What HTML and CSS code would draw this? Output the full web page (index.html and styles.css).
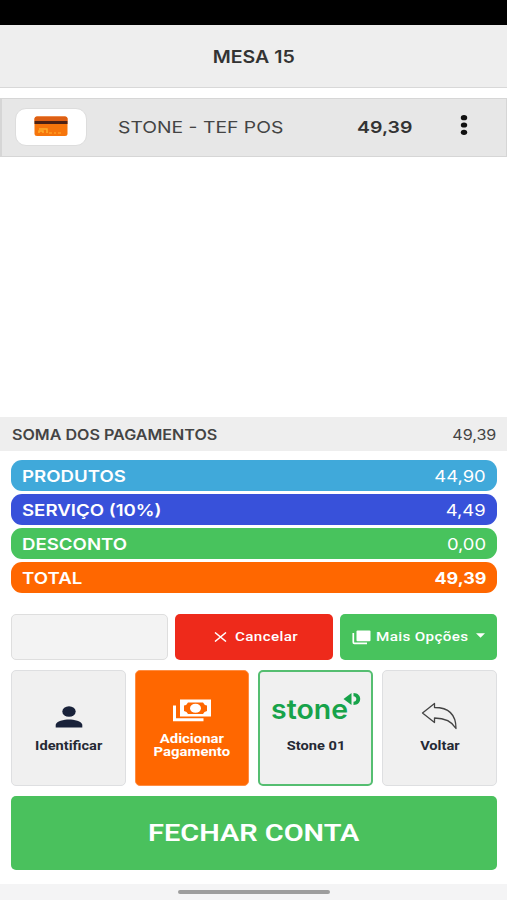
FILE: index.html
```html
<!DOCTYPE html>
<html lang="pt-BR">
<head>
<meta charset="utf-8">
<title>Mesa 15</title>
<link rel="stylesheet" href="styles.css">
</head>
<body>
<div class="statusbar"></div>
<header class="header"><h1 class="t t-title">MESA 15</h1></header>
<section class="payment">
  <div class="card-icon">
    <svg width="34" height="21" viewBox="0 0 34 21"><rect x=".5" y=".5" width="33" height="19.5" rx="2.5" fill="#f6750b"/><path d="M.5 5V3Q.5.5 3 .5h28q2.5 0 2.500 2.500v2z" fill="#dd5f14"/><path d="M.5 5h33v3H.5z" fill="#4c2115"/><path d="M5 13h8v4M5 17v-2h4v2" fill="none" stroke="#ffad2c" stroke-width="1.500"/><path d="M15 17h3m2 0h2m2 0h3" stroke="#ff9c22" stroke-width="1.300"/></svg>
  </div>
  <div class="method"><span class="t t-method">STONE - TEF POS</span></div>
  <div class="amount"><span class="t t-amount">49,39</span></div>
  <svg class="dots" width="10" height="22" viewBox="0 0 10 22"><ellipse cx="5" cy="3.700" rx="3.200" ry="2.600"/><ellipse cx="5" cy="11" rx="3.200" ry="2.600"/><ellipse cx="5" cy="18.300" rx="3.200" ry="2.600"/></svg>
</section>
<main class="space"></main>
<section class="sum"><span class="t t-sum">SOMA DOS PAGAMENTOS</span><span class="t r t-sumv">49,39</span></section>
<section class="totals">
  <div class="row products"><span class="t">PRODUTOS</span><span class="t r">44,90</span></div>
  <div class="row service"><span class="t">SERVIÇO (10%)</span><span class="t r">4,49</span></div>
  <div class="row discount"><span class="t">DESCONTO</span><span class="t r">0,00</span></div>
  <div class="row total"><span class="t">TOTAL</span><span class="t r t-strong">49,39</span></div>
</section>
<section class="actions">
  <div class="btn blank"></div>
  <button class="btn cancel"><svg width="13" height="10" viewBox="0 0 13 10"><path d="M1 .5l11 9M12 .5l-11 9" stroke="#fff" stroke-width="1.500"/></svg><span class="t">Cancelar</span></button>
  <button class="btn more"><svg width="19" height="15" viewBox="0 0 19 15"><rect x="4.500" y=".5" width="14" height="10.800" rx="1" fill="#fff"/><path d="M1.300 3v9.300q0 1 1 1H15" fill="none" stroke="#fff" stroke-width="1.700"/></svg><span class="t">Mais Opções</span><svg class="caret" width="9" height="5" viewBox="0 0 9 5"><path d="M0 .3h9L4.500 4.700z" fill="#fff"/></svg></button>
</section>
<section class="tiles">
  <button class="tile"><svg class="ico" width="28" height="22" viewBox="0 0 28 22"><ellipse cx="14" cy="5.500" rx="6.700" ry="5.300" fill="#19223a"/><path d="M.7 21.500v-2.700c0-3.600 8.800-5.400 13.300-5.400s13.300 1.800 13.300 5.400v2.700z" fill="#19223a"/></svg><span class="t">Identificar</span></button>
  <button class="tile add"><svg class="ico" width="38" height="24" viewBox="0 0 38 24"><path d="M1.500 6.500v14.300H30.500" fill="none" stroke="#fff" stroke-width="3"/><path fill="#fff" fill-rule="evenodd" d="M7 .5h31v17H7zM15 3.500Q14 6 11 6.500v5.500q3 .5 4 3h15q1-2.500 4-3v-5.500Q31 6 30 3.500z"/><ellipse cx="22.500" cy="9.300" rx="5.500" ry="4.500" fill="#fff"/></svg><span class="t">Adicionar</span><span class="t">Pagamento</span></button>
  <button class="tile selected"><svg class="logo" width="90" height="36" viewBox="0 0 90 36" fill="#17a34a"><text class="brand" x="0" y="27" textLength="77" lengthAdjust="spacingAndGlyphs">stone</text><path d="M80.500 1v12L72.500 7zM82.500 1C91.500 1 91.500 13 82.500 13V9.800C86.300 9.500 86.300 4.500 82.500 4.200z"/></svg><span class="t">Stone 01</span></button>
  <button class="tile"><svg class="ico back" width="37" height="29" viewBox="0 0 37 29"><path d="M1.500 11L13.500 1.500V5.500C27 5.500 35 12 35 26.500C31 19.500 24 16 13.500 16V20.500Z" fill="none" stroke="#444" stroke-width="1.300" stroke-linejoin="round"/></svg><span class="t">Voltar</span></button>
</section>
<button class="close"><span class="t t-close">FECHAR CONTA</span></button>
<footer class="nav"><div class="pill"></div></footer>
</body>
</html>
```
FILE: styles.css
```css
* { box-sizing: border-box; }
body { margin: 0; width: 507px; height: 900px; overflow: hidden; background: #fff; display: flex; flex-direction: column; font-family: Inter, "Liberation Sans", sans-serif; color: #333; }
button { font-family: Roboto, "Liberation Sans", sans-serif; border: 0; padding: 0; margin: 0; color: #fff; }
svg { display: block; flex: none; }
.t { display: inline-block; white-space: nowrap; transform-origin: left center; }
.r { transform-origin: right center; }
.statusbar { height: 25px; background: #000; flex: none; }
.header { height: 63px; background: #eee; border-bottom: 1px solid #d8d8d8; display: flex; align-items: center; justify-content: center; flex: none; }
.t-title { margin: 1px 0 0; font-size: 17px; font-weight: 600; line-height: 20px; transform-origin: center; transform: scaleX(1.15); }
.payment { margin-top: 10px; height: 59px; flex: none; background: #e7e7e7; border: 1px solid #d6d6d6; border-left-width: 2px; display: grid; grid-template-columns: 116px 238.5px 102.5px 1fr; align-items: center; }
.card-icon { width: 72px; height: 38px; margin-left: 13px; margin-top: -2px; background: #fff; border: 1px solid #ddd; border-radius: 11px; display: flex; align-items: center; justify-content: center; }
.method, .amount { margin-top: -2px; }
.t-method { font-size: 16.500px; color: #444; transform: scaleX(1.17); }
.t-amount { font-size: 16.500px; font-weight: 600; transform: scaleX(1.18); }
.dots { fill: #111; margin-top: -5px; }
.space { flex: none; height: 260px; }
.sum { height: 34px; flex: none; background: #eee; padding: 0 11px 0 12px; display: flex; align-items: center; justify-content: space-between; font-size: 14px; color: #444; }
.t-sum { font-weight: 600; transform: scaleX(1.15); }
.t-sumv { transform: scaleX(1.15); }
.totals { padding: 9px 10px 0 11px; display: flex; flex-direction: column; gap: 3px; flex: none; }
.row { height: 31px; border-radius: 11px; padding: 0 11px; display: flex; align-items: center; justify-content: space-between; color: #fff; font-size: 16px; }
.row .t { transform: scaleX(1.15); }
.row .t:first-child { font-weight: 600; transform: scaleX(1.165); }
.row .t-strong { font-weight: 700; transform: scaleX(1.12); }
.products { background: #40a9da; }
.service { background: #3851da; }
.discount { background: #48c35d; }
.total { background: #ff6700; }
.actions { margin: 21px 10px 0 11px; display: grid; grid-template-columns: repeat(3, 1fr); gap: 7px; flex: none; }
.btn { height: 46px; border-radius: 5px; display: flex; align-items: center; font-size: 13px; font-weight: 500; letter-spacing: .3px; }
.blank { background: #f3f3f3; border: 1px solid #dedede; }
.cancel { background: #ee2a1b; padding-left: 39px; gap: 8px; }
.more { background: #48c35d; padding-left: 12px; gap: 5px; }
.btn .t { transform: scaleX(1.17); margin-top: -2px; }
.caret { margin-left: auto; margin-right: 12px; margin-top: -3px; }
.tiles { margin: 10px 10px 0 11px; display: grid; grid-template-columns: repeat(4, 115px); justify-content: space-between; flex: none; }
.tile { height: 116px; border-radius: 5px; background: #f0f0f0; border: 1px solid #dedfe1; display: flex; flex-direction: column; align-items: center; color: #252934; font-size: 12.500px; font-weight: 700; line-height: 14px; }
.tile .t { transform-origin: center; transform: scaleX(1.17); }
.ico { margin-top: 35px; margin-bottom: 11px; }
.add { background: #ff6700; border-color: #ff8d42; color: #fff; margin-right: 1px; font-size: 12px; line-height: 13px; }
.add .t { transform: scaleX(1.24); }
.add .ico { margin-top: 28px; margin-bottom: 10px; }
.selected { border: 2px solid #55be71; }
.logo { margin-top: 20px; margin-bottom: 11px; overflow: visible; }
.brand { font-family: Inter, sans-serif; font-size: 27.500px; font-weight: 600; }
.back { margin-top: 31px; margin-bottom: 8px; }
.close { margin: 10px 10px 0 11px; height: 74px; flex: none; border-radius: 5px; background: #4ac15d; font-size: 24px; font-weight: 600; }
.t-close { transform-origin: center; transform: scaleX(1.205); }
.nav { margin-top: auto; height: 16px; background: #f4f4f5; display: flex; justify-content: center; padding-top: 6px; flex: none; }
.pill { width: 152px; height: 4px; border-radius: 2px; background: #9d9d9d; }
```
